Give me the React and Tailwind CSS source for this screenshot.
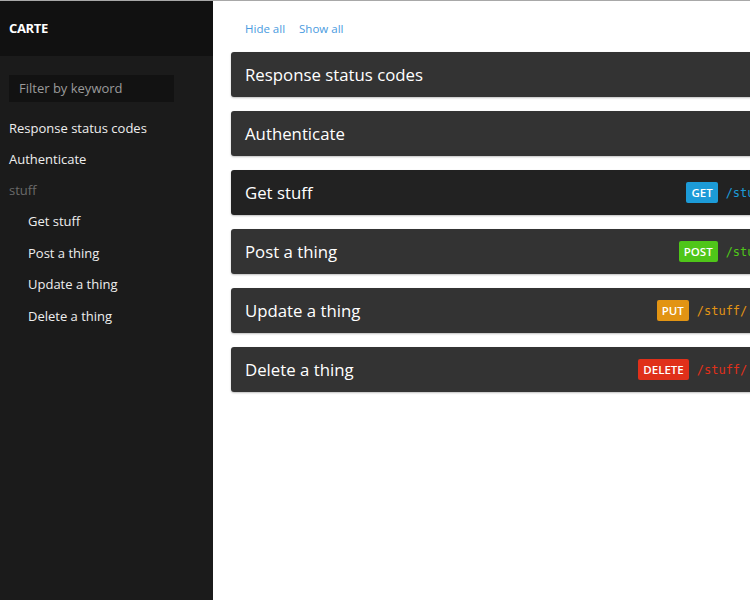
import React from "react";

const sections = [
  { title: "Response status codes" },
  { title: "Authenticate" },
  { title: "Get stuff", method: "GET", path: "/stuff", dark: true },
  { title: "Post a thing", method: "POST", path: "/stuff" },
  { title: "Update a thing", method: "PUT", path: "/stuff/:id" },
  { title: "Delete a thing", method: "DELETE", path: "/stuff/:id" },
];

const methodStyles = {
  GET: { badge: "bg-[#1c9bd8]", text: "text-[#1c9bd8]" },
  POST: { badge: "bg-[#4fc619]", text: "text-[#4fc619]" },
  PUT: { badge: "bg-[#e29413]", text: "text-[#e29413]" },
  DELETE: { badge: "bg-[#e0301a]", text: "text-[#e0301a]" },
};

const Sidebar = () => (
  <aside className="w-[213px] shrink-0 bg-[#1b1b1b] h-[599px]">
    <div className="h-[55px] bg-[#111111] flex items-center px-[9px]">
      <span className="text-[13px] font-bold text-white tracking-tight">CARTE</span>
    </div>
    <div className="px-[9px] pt-[19px]">
      <div className="w-[165px] h-[27px] bg-[#121212] flex items-center px-[10px] text-[13px] text-[#9a9a9a]">
        Filter by keyword
      </div>
    </div>
    <nav className="mt-[11px] px-[9px] text-[13px] text-[#eeeeee]">
      <div className="h-[31px] flex items-center">Response status codes</div>
      <div className="h-[31px] flex items-center">Authenticate</div>
      <div className="h-[31px] flex items-center text-[#6a6a6a]">stuff</div>
      <div className="pl-[19px]">
        <div className="h-[31.5px] flex items-center">Get stuff</div>
        <div className="h-[31.5px] flex items-center">Post a thing</div>
        <div className="h-[31.5px] flex items-center">Update a thing</div>
        <div className="h-[31.5px] flex items-center">Delete a thing</div>
      </div>
    </nav>
  </aside>
);

const SectionCard = ({ title, method, path, dark }) => {
  const s = method ? methodStyles[method] : null;
  return (
    <div
      className={`w-[552px] h-[45px] rounded-[3px] flex items-center justify-between px-[14px] shadow-[0_1px_2px_rgba(0,0,0,0.25)] ${dark ? "bg-[#222222]" : "bg-[#333333]"}`}
    >
      <span className="text-[16.8px] text-white">{title}</span>
      {s && (
        <div className="flex items-center gap-[8px]">
          <span
            className={`${s.badge} text-white text-[11.5px] font-semibold h-[21px] px-[5px] flex items-center rounded-[2px]`}
          >
            {method}
          </span>
          <span
            className={`${s.text} text-[12px] font-['DejaVu_Sans_Mono',monospace]`}
          >
            {path}
          </span>
        </div>
      )}
    </div>
  );
};

export default function App() {
  return (
    <div className="w-[750px] h-[600px] overflow-hidden border-t border-[#a8a8a8] bg-white flex font-['Open_Sans',sans-serif]">
      <Sidebar />
      <main className="pl-[18px] pt-[20px] flex-1">
        <div className="flex gap-[14px] pl-[14px] text-[11.5px] text-[#4a9be0] mb-[15px] h-[16px] items-center">
          <span>Hide all</span>
          <span>Show all</span>
        </div>
        <div className="flex flex-col gap-[14px]">
          {sections.map((sec) => (
            <SectionCard key={sec.title} {...sec} />
          ))}
        </div>
      </main>
    </div>
  );
}
